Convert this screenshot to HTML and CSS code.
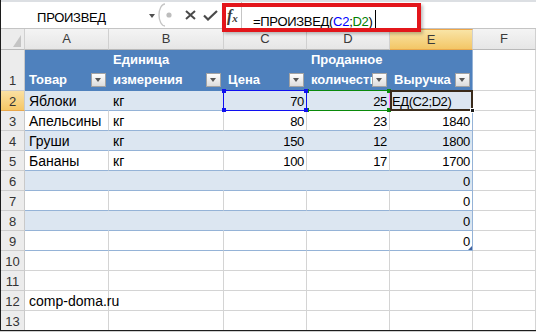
FILE: index.html
```html
<!DOCTYPE html>
<html lang="ru">
<head>
    <meta charset="UTF-8">
    <meta name="viewport" content="width=device-width, initial-scale=1.0">
    <title>ПРОИЗВЕД</title>
    <link rel="stylesheet" href="styles.css">
</head>
<body>
    <div class="window">
        <div class="fbar">
            <div class="namebox">ПРОИЗВЕД</div>
            <div class="nb-arrow"><span></span></div>
            <svg class="splitter" width="16" height="24" viewBox="0 0 16 24">
                <path d="M7 1 A6 11 0 0 0 7 23" fill="none" stroke="#c6c6c6" stroke-width="1.4"/>
                <circle cx="11" cy="12" r="2.6" fill="#bdbdbd"/>
            </svg>
            <svg class="btn-x" width="11" height="10" viewBox="0 0 11 10">
                <path d="M1 1 L10 9 M10 1 L1 9" stroke="#4a4a4a" stroke-width="2"/>
            </svg>
            <svg class="btn-ok" width="15" height="11" viewBox="0 0 15 11">
                <path d="M1 5.5 L5 9.5 L14 1" fill="none" stroke="#4a4a4a" stroke-width="2.2"/>
            </svg>
            <div class="fx"><i>f</i><sub>x</sub></div>
            <div class="formula">=ПРОИЗВЕД(<span class="ref-c">C2</span>;<span class="ref-d">D2</span>)<span class="caret"></span></div>
        </div>
        <div class="highlight"></div>

        <div class="row colhead">
            <div class="corner">
                <svg width="8" height="12" viewBox="0 0 8 12"><path d="M8 0 L8 12 L0 12 Z" fill="#c4c4c4"/></svg>
            </div>
            <div class="ch">A</div>
            <div class="ch">B</div>
            <div class="ch">C</div>
            <div class="ch">D</div>
            <div class="ch ch-on">E</div>
            <div class="ch">F</div>
        </div>

        <div class="row r1">
            <div class="rh">1</div>
            <div class="c th">Товар<span class="fb"></span></div>
            <div class="c th">Единица<br>измерения<span class="fb"></span></div>
            <div class="c th">Цена<span class="fb"></span></div>
            <div class="c th">Проданное<br>количество<span class="fb"></span></div>
            <div class="c th">Выручка<span class="fb"></span></div>
            <div class="c"></div>
        </div>

        <div class="row t band">
            <div class="rh rh-on">2</div>
            <div class="c">Яблоки</div>
            <div class="c">кг</div>
            <div class="c n">70
                <div class="ref-box blue"><i class="h tl"></i><i class="h tr"></i><i class="h bl"></i><i class="h br"></i></div>
            </div>
            <div class="c n">25
                <div class="ref-box green"><i class="h tl"></i><i class="h tr"></i><i class="h bl"></i><i class="h br"></i></div>
            </div>
            <div class="c ce edit">ЕД(C2;D2)
                <div class="active"><i class="fill"></i></div>
            </div>
            <div class="c"></div>
        </div>

        <div class="row t">
            <div class="rh">3</div>
            <div class="c">Апельсины</div>
            <div class="c">кг</div>
            <div class="c n">80</div>
            <div class="c n">23</div>
            <div class="c n ce">1840</div>
            <div class="c"></div>
        </div>

        <div class="row t band">
            <div class="rh">4</div>
            <div class="c">Груши</div>
            <div class="c">кг</div>
            <div class="c n">150</div>
            <div class="c n">12</div>
            <div class="c n ce">1800</div>
            <div class="c"></div>
        </div>

        <div class="row t">
            <div class="rh">5</div>
            <div class="c">Бананы</div>
            <div class="c">кг</div>
            <div class="c n">100</div>
            <div class="c n">17</div>
            <div class="c n ce">1700</div>
            <div class="c"></div>
        </div>

        <div class="row t band">
            <div class="rh">6</div>
            <div class="c"></div>
            <div class="c"></div>
            <div class="c"></div>
            <div class="c"></div>
            <div class="c n ce">0</div>
            <div class="c"></div>
        </div>

        <div class="row t">
            <div class="rh">7</div>
            <div class="c"></div>
            <div class="c"></div>
            <div class="c"></div>
            <div class="c"></div>
            <div class="c n ce">0</div>
            <div class="c"></div>
        </div>

        <div class="row t band">
            <div class="rh">8</div>
            <div class="c"></div>
            <div class="c"></div>
            <div class="c"></div>
            <div class="c"></div>
            <div class="c n ce">0</div>
            <div class="c"></div>
        </div>

        <div class="row t">
            <div class="rh">9</div>
            <div class="c"></div>
            <div class="c"></div>
            <div class="c"></div>
            <div class="c"></div>
            <div class="c n ce last">0</div>
            <div class="c"></div>
        </div>

        <div class="row">
            <div class="rh">10</div>
            <div class="c"></div><div class="c"></div><div class="c"></div>
            <div class="c"></div><div class="c"></div><div class="c"></div>
        </div>
        <div class="row">
            <div class="rh">11</div>
            <div class="c"></div><div class="c"></div><div class="c"></div>
            <div class="c"></div><div class="c"></div><div class="c"></div>
        </div>
        <div class="row">
            <div class="rh">12</div>
            <div class="c">comp-doma.ru</div><div class="c"></div><div class="c"></div>
            <div class="c"></div><div class="c"></div><div class="c"></div>
        </div>
        <div class="row">
            <div class="rh">13</div>
            <div class="c"></div><div class="c"></div><div class="c"></div>
            <div class="c"></div><div class="c"></div><div class="c"></div>
        </div>
    </div>
</body>
</html>
```

FILE: styles.css
```css
* {
    box-sizing: border-box;
}
body {
    margin: 0;
    background: #cfcfcf;
    font-family: "Liberation Sans", Arial, sans-serif;
    color: #000;
}
.window {
    position: relative;
    width: 536px;
    height: 331px;
    background: #fff;
    border-left: 1px solid #1c1c1c;
    border-bottom: 1px solid #1c1c1c;
    overflow: hidden;
}

/* formula bar */
.fbar {
    display: flex;
    height: 29px;
    border-top: 2px solid #dcdfe3;
    border-bottom: 1px solid #c4c4c4;
}
.namebox {
    width: 145px;
    padding: 8px 4px 0 0;
    text-align: center;
    font-size: 13px;
    line-height: 16px;
    letter-spacing: -0.3px;
}
.nb-arrow {
    width: 12px;
    position: relative;
}
.nb-arrow span {
    position: absolute;
    left: 3px;
    top: 12px;
    border-left: 3.5px solid transparent;
    border-right: 3.5px solid transparent;
    border-top: 4px solid #505050;
}
.splitter {
    margin-top: 1px;
}
.btn-x {
    margin: 8px 0 0 11px;
}
.btn-ok {
    margin: 8px 0 0 7px;
}
.fx {
    width: 16px;
    margin-left: 7px;
    padding: 6px 0 0 2px;
    font-family: "Liberation Serif", serif;
    font-weight: bold;
    color: #3a3a3a;
    font-size: 16px;
    line-height: 16px;
    white-space: nowrap;
}
.fx sub {
    font-size: 11px;
    font-style: italic;
    vertical-align: -1px;
}
.formula {
    flex: 1;
    border-left: 1px solid #c5c5c5;
    padding: 8px 0 0 11px;
    font-size: 13px;
    line-height: 16px;
    letter-spacing: -0.3px;
    white-space: nowrap;
}
.ref-c {
    color: #0000ff;
}
.ref-d {
    color: #008000;
}
.caret {
    display: inline-block;
    width: 1px;
    height: 18px;
    margin-left: 2px;
    background: #000;
    vertical-align: -2px;
}
.highlight {
    position: absolute;
    left: 221px;
    top: 3px;
    width: 199px;
    height: 29px;
    border: 4px solid #e3161b;
    box-shadow: 2px 2px 3px rgba(0,0,0,0.25);
    z-index: 5;
}

/* sheet grid */
.row {
    display: grid;
    grid-template-columns: 24px 84px 115px 83px 83px 83px 1fr;
    height: 20px;
}
.colhead {
    height: 21px;
}
.r1 {
    height: 41px;
}
.corner {
    display: flex;
    justify-content: flex-end;
    align-items: flex-end;
    padding: 0 3px 2px 0;
    background: #ececec;
    border-right: 1px solid #d0d0d0;
    border-bottom: 1px solid #b9b9b9;
}
.ch {
    background: linear-gradient(#f4f4f4, #e6e6e6);
    border-right: 1px solid #d0d0d0;
    border-bottom: 1px solid #b9b9b9;
    text-align: center;
    font-size: 13px;
    line-height: 20px;
    color: #3a3a3a;
}
.ch-on {
    background: linear-gradient(#f9e4a6, #f3c666);
    border-top: 1px solid #eea648;
    border-bottom-color: #e9a84c;
    line-height: 19px;
}
.rh {
    background: #ececec;
    border-right: 1px solid #c9c9c9;
    border-bottom: 1px solid #cdcdcd;
    text-align: center;
    font-size: 13px;
    line-height: 17px;
    padding-top: 2px;
    color: #333;
}
.r1 .rh {
    padding-top: 22px;
}
.rh-on {
    background: linear-gradient(#fae0a2, #f5c766);
    border-bottom-color: #e9a84c;
}

/* cells */
.c {
    position: relative;
    border-right: 1px solid #d4d4d4;
    border-bottom: 1px solid #d4d4d4;
    padding: 2px 3px 0 4px;
    font-size: 14px;
    line-height: 17px;
    white-space: nowrap;
}
.n {
    text-align: right;
    padding-right: 2px;
    font-size: 13px;
    letter-spacing: -0.3px;
}
.th {
    display: flex;
    flex-direction: column;
    justify-content: flex-end;
    overflow: hidden;
    padding: 0 3px 0 4px;
    background: #4f81bd;
    border-color: #4f81bd;
    color: #fff;
    font-size: 13px;
    font-weight: bold;
    line-height: 20px;
}
.r1 .th:nth-child(6) {
    border-right-color: #95b3d7;
}
.fb {
    position: absolute;
    right: 2px;
    bottom: 3px;
    width: 15px;
    height: 14px;
    border: 1px solid #a3a3a3;
    background: linear-gradient(#fdfdfd, #dcdcdc);
}
.fb::after {
    content: "";
    position: absolute;
    left: 3px;
    top: 4px;
    border-left: 3.5px solid transparent;
    border-right: 3.5px solid transparent;
    border-top: 4px solid #575757;
}
.t .c {
    border-bottom-color: #95b3d7;
}
.t .c:last-child {
    border-bottom-color: #d4d4d4;
}
.band .c {
    background: #dce6f1;
    border-right-color: #dce6f1;
}
.band .c:last-child {
    background: #fff;
    border-right-color: #d4d4d4;
}
.t .ce,
.band .ce {
    border-right-color: #95b3d7;
}
.last::after {
    content: "";
    position: absolute;
    right: 0;
    bottom: 0;
    border-left: 4px solid transparent;
    border-bottom: 4px solid #3f63a0;
}
.edit {
    padding-left: 2px;
    font-size: 13px;
    letter-spacing: -0.4px;
}

/* formula reference boxes */
.ref-box {
    position: absolute;
    left: -1px;
    top: -1px;
    width: 84px;
    height: 21px;
}
.ref-box.blue {
    border: 1px solid #1010f0;
    z-index: 3;
}
.ref-box.green {
    border: 1px solid #0a8a0a;
    border-right-color: #ff80ff;
    z-index: 2;
}
.h {
    position: absolute;
    width: 4px;
    height: 4px;
}
.blue .h {
    background: #1010f0;
}
.green .h {
    background: #0a8a0a;
}
.tl { left: -2px; top: -2px; }
.tr { right: -2px; top: -2px; }
.bl { left: -2px; bottom: -2px; }
.br { right: -2px; bottom: -2px; }
.active {
    position: absolute;
    left: 0;
    top: -1px;
    width: 83px;
    height: 21px;
    border: 2px solid #3a2b1b;
    z-index: 3;
}
.fill {
    position: absolute;
    right: -4px;
    bottom: -4px;
    width: 5px;
    height: 5px;
    background: #1a1a1a;
    border: 1px solid #fff;
}
```
